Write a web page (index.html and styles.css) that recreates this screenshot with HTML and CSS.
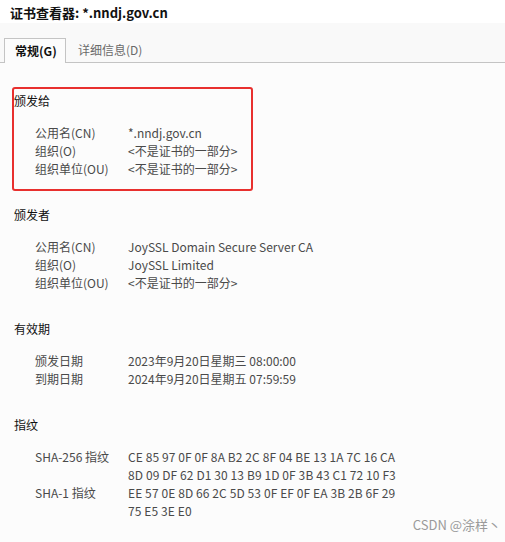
FILE: index.html
```html
<!DOCTYPE html>
<html lang="zh">
<head>
<meta charset="utf-8">
<link rel="stylesheet" href="styles.css">
</head>
<body>
<div class="window">
  <div class="title">证书查看器: *.nndj.gov.cn</div>
  <div class="tabs">
    <div class="tab active">常规(G)</div>
    <div class="tab">详细信息(D)</div>
  </div>
  <div class="content">
    <section class="section highlight">
      <div class="heading">颁发给</div>
      <div class="rows">
        <div class="label">公用名(CN)</div><div class="value">*.nndj.gov.cn</div>
        <div class="label">组织(O)</div><div class="value">&lt;不是证书的一部分&gt;</div>
        <div class="label">组织单位(OU)</div><div class="value">&lt;不是证书的一部分&gt;</div>
      </div>
    </section>
    <section class="section">
      <div class="heading">颁发者</div>
      <div class="rows">
        <div class="label">公用名(CN)</div><div class="value">JoySSL Domain Secure Server CA</div>
        <div class="label">组织(O)</div><div class="value">JoySSL Limited</div>
        <div class="label">组织单位(OU)</div><div class="value">&lt;不是证书的一部分&gt;</div>
      </div>
    </section>
    <section class="section">
      <div class="heading">有效期</div>
      <div class="rows">
        <div class="label">颁发日期</div><div class="value">2023年9月20日星期三 08:00:00</div>
        <div class="label">到期日期</div><div class="value">2024年9月20日星期五 07:59:59</div>
      </div>
    </section>
    <section class="section">
      <div class="heading">指纹</div>
      <div class="rows">
        <div class="label">SHA-256 指纹</div><div class="value hex">CE 85 97 0F 0F 8A B2 2C 8F 04 BE 13 1A 7C 16 CA<br>8D 09 DF 62 D1 30 13 B9 1D 0F 3B 43 C1 72 10 F3</div>
        <div class="label">SHA-1 指纹</div><div class="value hex">EE 57 0E 8D 66 2C 5D 53 0F EF 0F EA 3B 2B 6F 29<br>75 E5 3E E0</div>
      </div>
    </section>
  </div>
  <div class="watermark">CSDN @涂样丶</div>
</div>
</body>
</html>
```
FILE: styles.css
```css
* { box-sizing: border-box; }
html, body { margin: 0; padding: 0; }
body {
  width: 505px;
  height: 542px;
  overflow: hidden;
  background: #fcfcfc;
  font-family: "Noto Sans CJK SC", "Noto Sans", sans-serif;
  font-size: 12px;
  color: #4a4a4a;
}
.window {
  position: relative;
  height: 542px;
}
.title {
  height: 23px;
  background: #ffffff;
  padding: 4px 0 0 10px;
  font-size: 13px;
  font-weight: bold;
  line-height: 18px;
  color: #111;
}
.tabs {
  display: flex;
  height: 40px;
  padding: 15px 0 0 4px;
  background: #f9f9f9;
  border-bottom: 1px solid #c4c4c4;
}
.tab {
  height: 25px;
  padding: 0 12px;
  line-height: 24px;
  font-size: 12px;
  white-space: nowrap;
  color: #6a6a6a;
}
.tab.active {
  width: 62px;
  padding: 0 0 0 10px;
  font-weight: bold;
  color: #111;
  background: #fcfcfc;
  border: 1px solid #c4c4c4;
  border-bottom: none;
  margin-bottom: -1px;
  height: 25px;
}
.content {
  padding: 29px 0 0 14px;
  display: flex;
  flex-direction: column;
  gap: 28px;
}
.section {
  position: relative;
  display: flex;
  flex-direction: column;
  gap: 14px;
}
.highlight::after {
  content: "";
  position: absolute;
  left: -2px;
  top: -5px;
  width: 237px;
  height: 100px;
  border: 2.5px solid #e8302e;
  border-radius: 3px;
}
.heading {
  line-height: 18px;
  color: #111;
}
.rows {
  display: grid;
  grid-template-columns: 93px auto;
  padding-left: 21px;
  line-height: 18px;
}
.value.hex {
  letter-spacing: 0.1px;
}
.watermark {
  position: absolute;
  right: 4px;
  bottom: 8px;
  font-size: 13px;
  color: #9a9a9a;
}
```
